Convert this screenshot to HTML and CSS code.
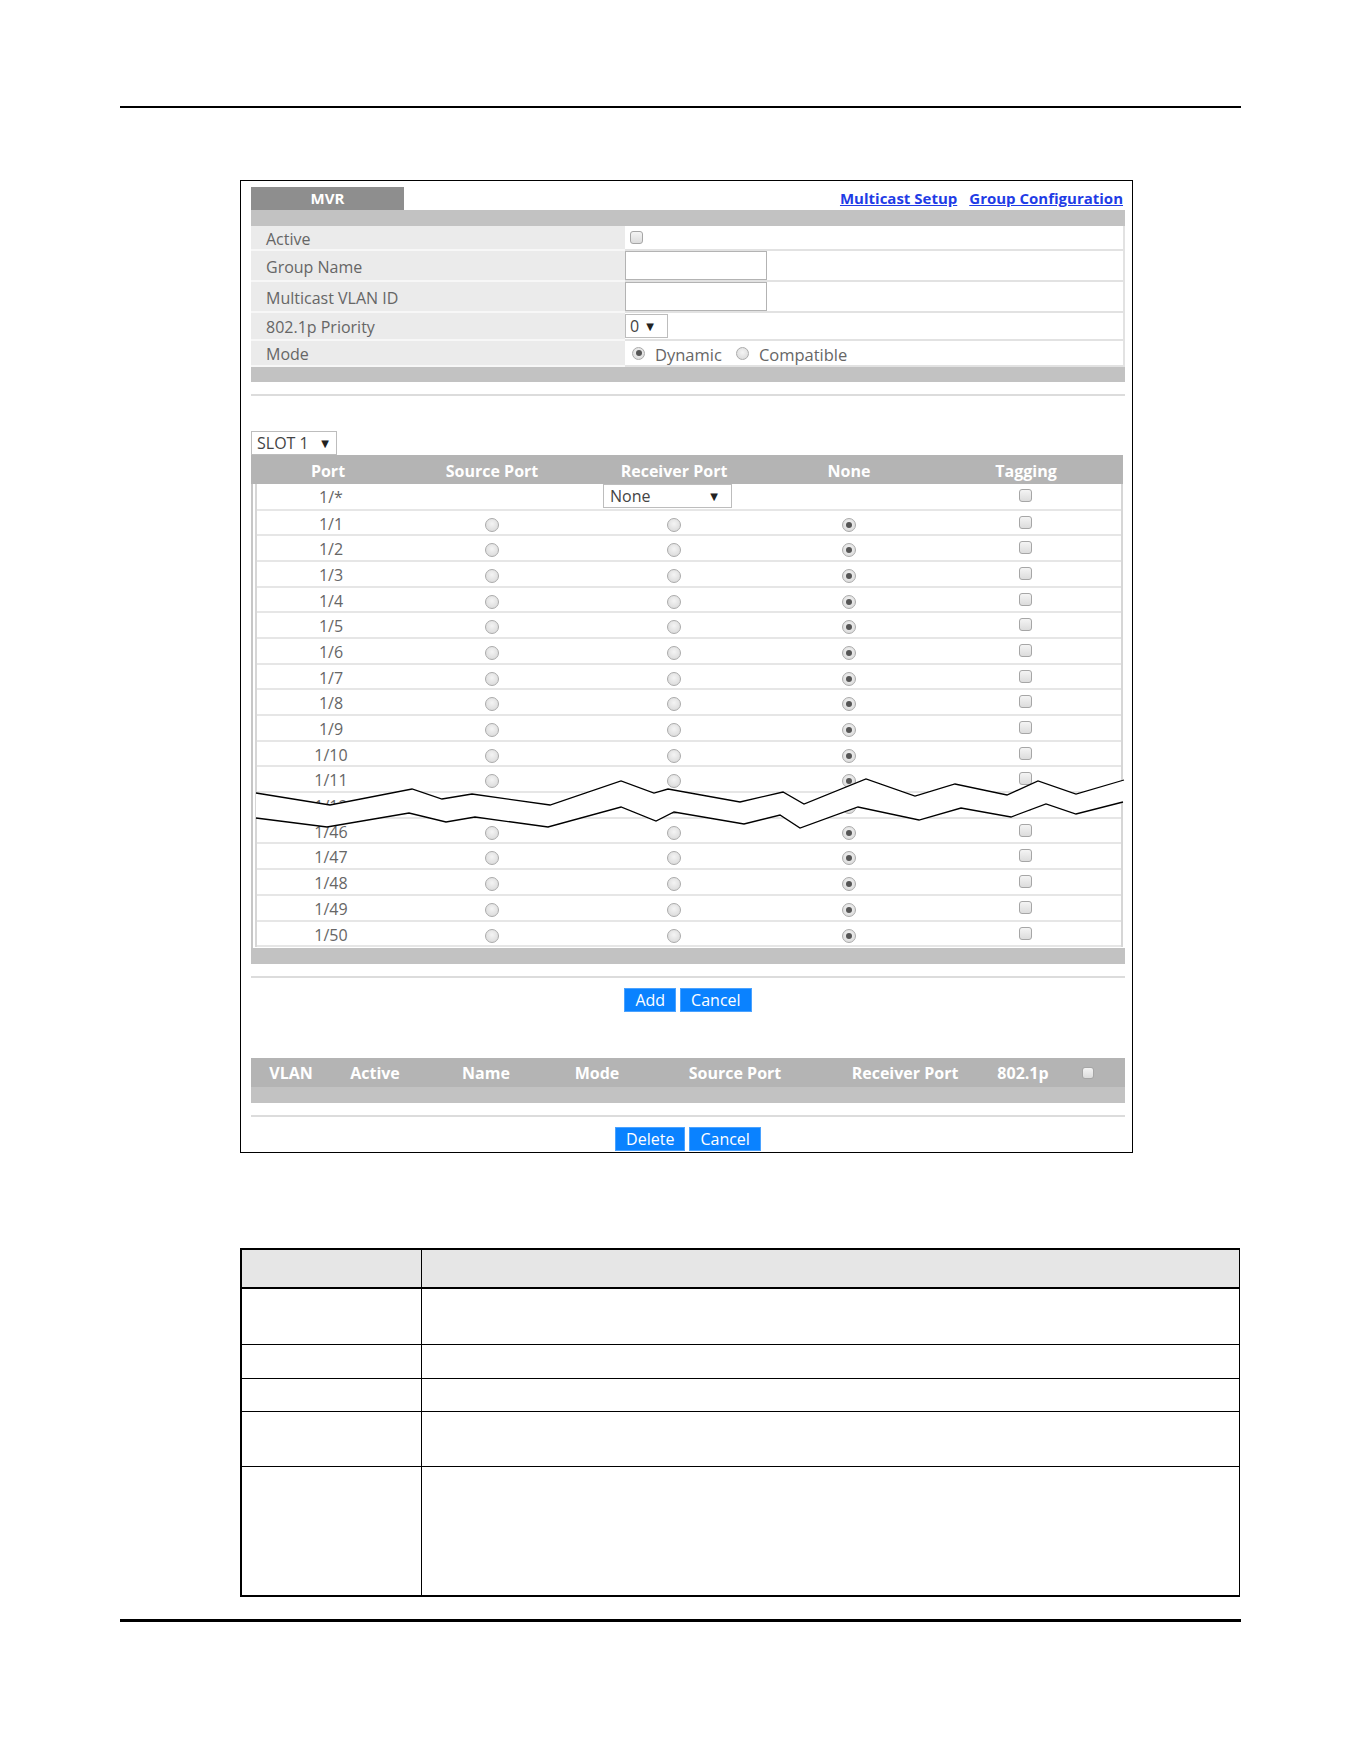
FILE: index.html
```html
<!DOCTYPE html>
<html lang="en">
<head>
    <meta charset="UTF-8">
    <title>MVR</title>
    <link rel="stylesheet" href="styles.css">
</head>
<body>
    <div class="rule top-rule"></div>

    <div class="screen">
        <div class="tabs">
            <div class="tab">MVR</div>
            <div class="links"><a href="#">Multicast Setup</a><a href="#">Group Configuration</a></div>
        </div>
        <div class="bar"></div>

        <div class="form-grid">
            <div class="label">Active</div>
            <div class="value"><span class="check"></span></div>
            <div class="label">Group Name</div>
            <div class="value"><div class="text-input"></div></div>
            <div class="label">Multicast VLAN ID</div>
            <div class="value"><div class="text-input"></div></div>
            <div class="label">802.1p Priority</div>
            <div class="value"><div class="select prio">0<span class="arrow">▼</span></div></div>
            <div class="label">Mode</div>
            <div class="value mode">
                <span class="radio on"></span><span class="opt">Dynamic</span>
                <span class="radio"></span><span class="opt">Compatible</span>
            </div>
        </div>
        <div class="bar thin"></div>
        <div class="sep"></div>

        <div class="select slot">SLOT 1<span class="arrow">▼</span></div>
        <div class="port-head">
            <div>Port</div><div>Source Port</div><div>Receiver Port</div><div>None</div><div>Tagging</div>
        </div>
        <div class="port-body">
            <div class="port-rows">
                <div class="port-row first"><span>1/*</span><span></span><div class="select pick">None<span class="arrow">▼</span></div><span></span><span class="check"></span></div>
                <div class="port-row"><span>1/1</span><span class="radio"></span><span class="radio"></span><span class="radio on"></span><span class="check"></span></div>
                <div class="port-row"><span>1/2</span><span class="radio"></span><span class="radio"></span><span class="radio on"></span><span class="check"></span></div>
                <div class="port-row"><span>1/3</span><span class="radio"></span><span class="radio"></span><span class="radio on"></span><span class="check"></span></div>
                <div class="port-row"><span>1/4</span><span class="radio"></span><span class="radio"></span><span class="radio on"></span><span class="check"></span></div>
                <div class="port-row"><span>1/5</span><span class="radio"></span><span class="radio"></span><span class="radio on"></span><span class="check"></span></div>
                <div class="port-row"><span>1/6</span><span class="radio"></span><span class="radio"></span><span class="radio on"></span><span class="check"></span></div>
                <div class="port-row"><span>1/7</span><span class="radio"></span><span class="radio"></span><span class="radio on"></span><span class="check"></span></div>
                <div class="port-row"><span>1/8</span><span class="radio"></span><span class="radio"></span><span class="radio on"></span><span class="check"></span></div>
                <div class="port-row"><span>1/9</span><span class="radio"></span><span class="radio"></span><span class="radio on"></span><span class="check"></span></div>
                <div class="port-row"><span>1/10</span><span class="radio"></span><span class="radio"></span><span class="radio on"></span><span class="check"></span></div>
                <div class="port-row"><span>1/11</span><span class="radio"></span><span class="radio"></span><span class="radio on"></span><span class="check"></span></div>
                <div class="port-row"><span>1/12</span><span class="radio"></span><span class="radio"></span><span class="radio on"></span><span class="check"></span></div>
                <div class="port-row"><span>1/46</span><span class="radio"></span><span class="radio"></span><span class="radio on"></span><span class="check"></span></div>
                <div class="port-row"><span>1/47</span><span class="radio"></span><span class="radio"></span><span class="radio on"></span><span class="check"></span></div>
                <div class="port-row"><span>1/48</span><span class="radio"></span><span class="radio"></span><span class="radio on"></span><span class="check"></span></div>
                <div class="port-row"><span>1/49</span><span class="radio"></span><span class="radio"></span><span class="radio on"></span><span class="check"></span></div>
                <div class="port-row"><span>1/50</span><span class="radio"></span><span class="radio"></span><span class="radio on"></span><span class="check"></span></div>
            </div>
            <!-- break marks: rows 1/13 to 1/45 are left out -->
            <svg class="break" width="880" height="470" viewBox="0 0 880 470">
                <polygon fill="#fff" points="5,309 79,321 161,305 191,315 221,310 299,321 370,297 403,309 417,305 489,318 532,308 553,320 615,295 664,312 704,300 756,311 787,297 825,310 873,296 872,318 825,330 795,320 760,333 710,324 668,336 607,323 549,344 529,331 493,340 423,328 405,337 370,323 297,343 224,333 195,338 158,329 76,343 5,334"/>
                <polyline fill="none" stroke="#000" stroke-width="1.3" points="5,309 79,321 161,305 191,315 221,310 299,321 370,297 403,309 417,305 489,318 532,308 553,320 615,295 664,312 704,300 756,311 787,297 825,310 873,296"/>
                <polyline fill="none" stroke="#000" stroke-width="1.3" points="5,334 76,343 158,329 195,338 224,333 297,343 370,323 405,337 423,328 493,340 529,331 549,344 607,323 668,336 710,324 760,333 795,320 825,330 872,318"/>
            </svg>
        </div>
        <div class="bar"></div>
        <div class="sep"></div>
        <div class="actions">
            <button class="btn">Add</button><button class="btn">Cancel</button>
        </div>

        <div class="vlan-head">
            <div>VLAN</div><div>Active</div><div>Name</div><div>Mode</div><div>Source Port</div><div>Receiver Port</div><div>802.1p</div><span class="check"></span>
        </div>
        <div class="bar"></div>
        <div class="sep"></div>
        <div class="actions">
            <button class="btn">Delete</button><button class="btn">Cancel</button>
        </div>
    </div>

    <table class="desc">
        <tr class="head"><th class="first"></th><th></th></tr>
        <tr class="r1"><td class="first"></td><td></td></tr>
        <tr class="r2"><td class="first"></td><td></td></tr>
        <tr class="r3"><td class="first"></td><td></td></tr>
        <tr class="r4"><td class="first"></td><td></td></tr>
        <tr class="r5 last"><td class="first"></td><td></td></tr>
    </table>

    <div class="rule bottom-rule"></div>
    <div class="rule edge-rule"></div>
</body>
</html>
```

FILE: styles.css
```css
* {
    box-sizing: border-box;
}

body {
    margin: 0;
    background: #fff;
    font-family: "Open Sans", "DejaVu Sans", sans-serif;
}

.rule {
    background: #000;
}

.top-rule {
    margin: 106px 0 0 120px;
    width: 1121px;
    height: 2px;
}

/* switch web screen */
.screen {
    margin: 72px 0 0 240px;
    width: 893px;
    border: 1px solid #000;
    padding: 6px 7px 1px 10px;
}

.tabs {
    display: flex;
    justify-content: space-between;
    align-items: flex-end;
    height: 23px;
}

.tab {
    width: 153px;
    height: 23px;
    line-height: 23px;
    background: #8e8e8e;
    color: #fff;
    font-weight: 700;
    font-size: 15px;
    text-align: center;
}

.links {
    padding: 0 2px 3px 0;
    line-height: 17px;
}

.links a {
    font-size: 15px;
    font-weight: 700;
    color: #1f3ce6;
    margin-left: 12px;
}

.bar {
    height: 16px;
    background: #c2c2c2;
}

.bar.thin {
    height: 15px;
}

.sep {
    height: 2px;
    margin-top: 12px;
    background: #dcdcdc;
}

.form-grid {
    display: grid;
    grid-template-columns: 374px 1fr;
    grid-template-rows: 25px 31px 31px 28px 26px;
}

.label {
    display: flex;
    align-items: center;
    padding: 2px 0 0 15px;
    background: #ebebeb;
    color: #666;
    font-size: 16px;
    border-bottom: 2px solid #f7f7f7;
}

.value {
    display: flex;
    align-items: center;
    border-bottom: 2px solid #e2e2e2;
    border-right: 2px solid #e2e2e2;
}

.value > .check {
    margin-left: 5px;
}

.text-input {
    width: 142px;
    height: 29px;
    border: 1px solid #b3b3b3;
    background: #fff;
}

.mode {
    padding-top: 2px;
    color: #666;
    font-size: 16.5px;
}

.mode .radio {
    width: 13px;
    height: 13px;
    margin: -2px 0 0 7px;
}

.mode .radio.on::after {
    left: 2.5px;
    top: 2.5px;
}

.mode .opt {
    margin-left: 10px;
}

.mode .opt + .radio {
    margin-left: 14px;
}

/* fake selects */
.select {
    display: flex;
    align-items: center;
    justify-content: space-between;
    height: 24px;
    border: 1px solid #bdbdbd;
    background: #fff;
    color: #444;
    font-size: 16px;
    padding: 0 7px 0 5px;
}

.select .arrow {
    font-family: "DejaVu Sans", sans-serif;
    font-size: 10px;
    color: #222;
}

.slot {
    margin-top: 35px;
    width: 86px;
}

.prio {
    width: 43px;
    padding: 0 13px 0 4px;
}

.pick {
    justify-self: start;
    margin: -2px 0 0 24px;
    width: 129px;
    padding: 0 13px 0 6px;
}

/* port table */
.port-head {
    display: grid;
    grid-template-columns: 154px 174px 190px 160px 1fr;
    align-items: center;
    justify-items: center;
    width: 872px;
    height: 29px;
    padding-top: 2px;
    background: #b4b4b4;
    color: #fff;
    font-weight: 700;
    font-size: 16px;
}

.port-body {
    position: relative;
    width: 872px;
    border-left: 2px solid #c6c6c6;
    padding: 0 0 1px 2px;
}

.port-rows {
    border-left: 2px solid #d6d6d6;
    border-right: 2px solid #d6d6d6;
}

.port-row {
    display: grid;
    grid-template-columns: 148px 174px 190px 160px 1fr;
    align-items: center;
    justify-items: center;
    height: 25.7px;
    padding-top: 2px;
    border-bottom: 2px solid #e6e6e6;
    color: #666;
    font-size: 16px;
}

.port-row.first {
    height: 26.5px;
}

.port-row .radio {
    margin-top: 2px;
}

.port-row .check {
    margin-top: -3px;
}

.break {
    position: absolute;
    left: -2px;
    top: 0;
}

.radio {
    position: relative;
    width: 14px;
    height: 14px;
    border-radius: 50%;
    border: 1px solid #ababab;
    background: radial-gradient(circle at 50% 40%, #f4f4f4 0%, #dadada 85%);
}

.radio.on::after {
    content: "";
    position: absolute;
    left: 3px;
    top: 3px;
    width: 6px;
    height: 6px;
    border-radius: 50%;
    background: #555;
}

.check {
    width: 13px;
    height: 13px;
    border: 1px solid #a6a6a6;
    border-radius: 3px;
    background: linear-gradient(#f4f4f4, #dcdcdc);
}

.actions {
    display: flex;
    justify-content: center;
    gap: 4px;
    margin-top: 10px;
}

.btn {
    height: 24px;
    padding: 0 10px;
    border: 1px solid #4aa2ff;
    background: #0a82ff;
    color: #fff;
    font-family: "Open Sans", sans-serif;
    font-size: 16px;
    line-height: 20px;
}

.vlan-head {
    display: grid;
    grid-template-columns: 80px 88px 134px 88px 188px 152px 84px 46px 1fr;
    align-items: center;
    justify-items: center;
    margin-top: 46px;
    height: 29px;
    background: #b4b4b4;
    color: #fff;
    font-weight: 700;
    font-size: 16px;
}

.vlan-head .check {
    align-self: start;
    margin-top: 9px;
    width: 12px;
    height: 12px;
}

/* field description table */
.desc {
    margin: 95px 0 0 240px;
    width: 1000px;
    border-collapse: collapse;
}

.desc th,
.desc td {
    padding: 0;
    border: 1px solid #000;
}

.desc .first {
    width: 180px;
    border-left: 2px solid #000;
}

.desc .head th {
    height: 39px;
    background: #e6e6e6;
    border-top: 2px solid #000;
    border-bottom: 2px solid #000;
}

.desc .r1 { height: 56px; }
.desc .r2 { height: 34px; }
.desc .r3 { height: 33px; }
.desc .r4 { height: 55px; }
.desc .r5 { height: 130px; }

.desc .last td {
    border-bottom: 2px solid #000;
}

.bottom-rule {
    margin: 22px 0 0 120px;
    width: 1121px;
    height: 3px;
}

.edge-rule {
    margin-top: 139px;
    width: 1196px;
    height: 2px;
}
```
